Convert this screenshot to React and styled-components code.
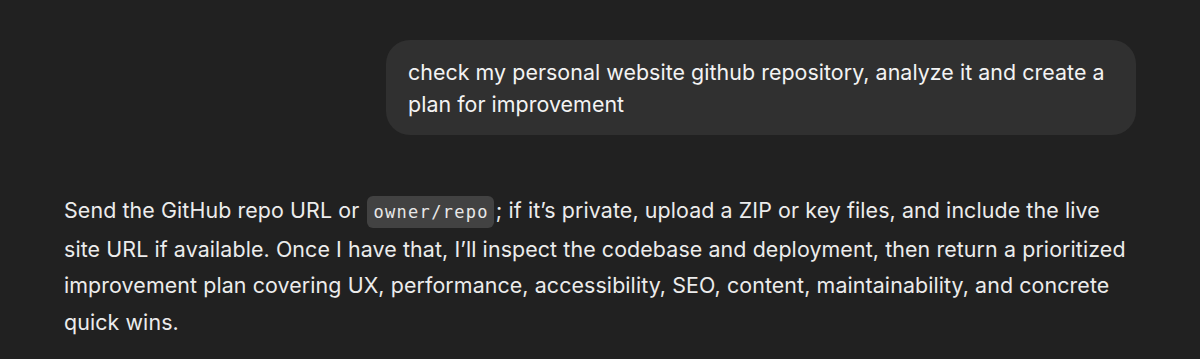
import React from 'react';
import styled, { createGlobalStyle } from 'styled-components';

const GlobalStyle = createGlobalStyle`
  html, body {
    margin: 0;
    padding: 0;
    background: #212121;
  }
  body {
    font-family: Inter, "Noto Sans", "Liberation Sans", sans-serif;
    color: #ececec;
    -webkit-font-smoothing: antialiased;
  }
`;

const Thread = styled.div`
  display: flex;
  flex-direction: column;
  padding: 40px 64px 0 64px;
  width: 1200px;
  box-sizing: border-box;
`;

const UserRow = styled.div`
  display: flex;
  justify-content: flex-end;
`;

const UserBubble = styled.div`
  background: #303030;
  border-radius: 24px;
  padding: 16px 22px 15px;
  max-width: 706px;
  font-size: 21.4px;
  letter-spacing: 0.05px;
  line-height: 32px;
  color: #f3f3f3;
`;

const AssistantMessage = styled.div`
  margin-top: 57px;
  font-size: 21.4px;
  letter-spacing: 0.1px;
  line-height: 36.5px;
  color: #ececec;
  max-width: 1072px;
`;

const Code = styled.code`
  font-family: "DejaVu Sans Mono", "Liberation Mono", monospace;
  font-size: 17px;
  letter-spacing: 1.3px;
  background: #424242;
  border-radius: 6px;
  padding: 6px 5px 6px 6px;
  margin: 0 2px 0 2px;
  color: #e8e8e8;
`;

export default function App() {
  return (
    <>
      <GlobalStyle />
      <Thread>
        <UserRow>
          <UserBubble>
            check my personal website github repository, analyze it and create a plan for improvement
          </UserBubble>
        </UserRow>
        <AssistantMessage>
          Send the GitHub repo URL or <Code>owner/repo</Code>; if it’s private, upload a ZIP or key files, and include the live site URL if available. Once I have that, I’ll inspect the codebase and deployment, then return a prioritized improvement plan covering UX, performance, accessibility, SEO, content, maintainability, and concrete quick wins.
        </AssistantMessage>
      </Thread>
    </>
  );
}
